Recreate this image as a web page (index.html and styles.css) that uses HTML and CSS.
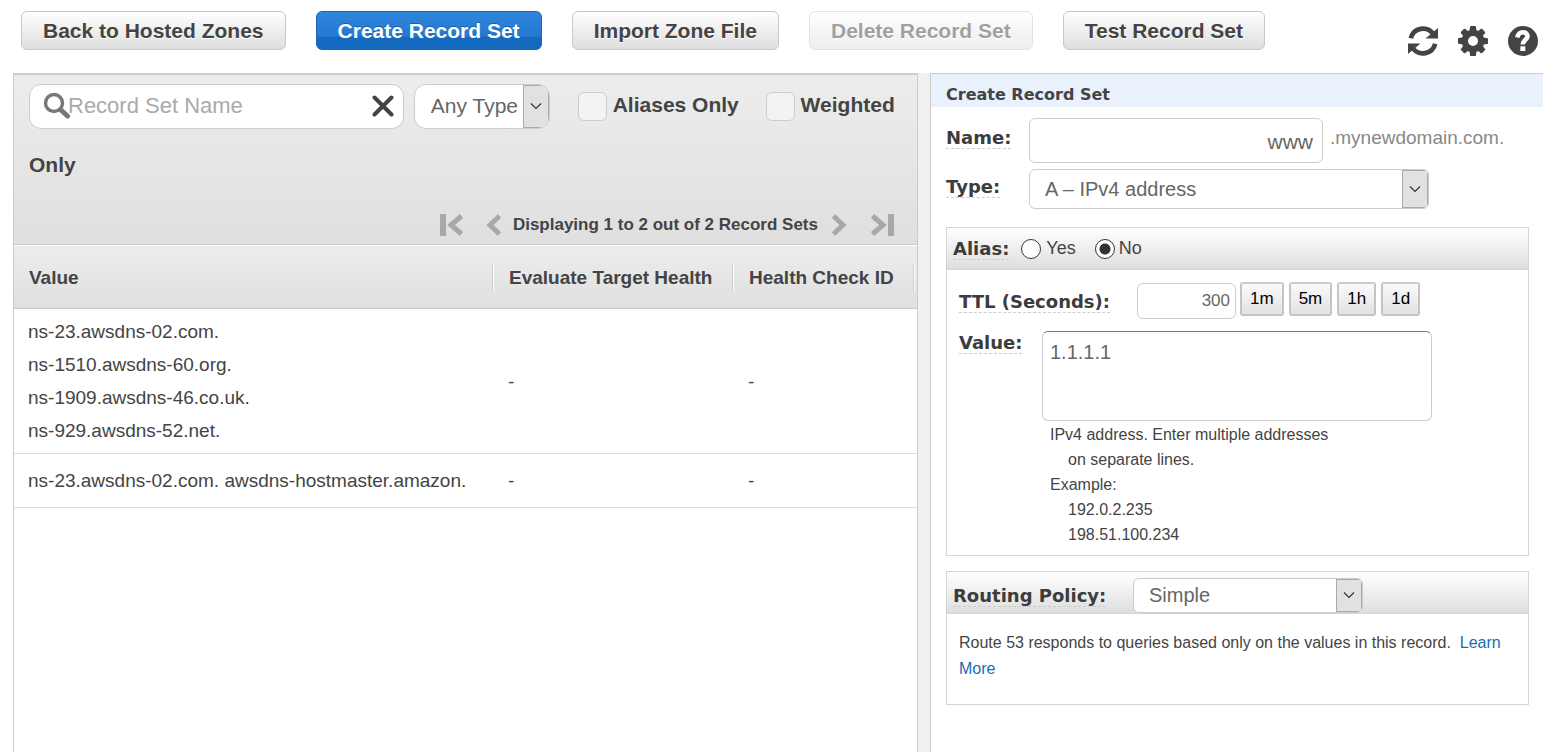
FILE: index.html
```html
<!DOCTYPE html>
<html lang="en">
<head>
<meta charset="utf-8">
<title>Hosted Zone Record Sets</title>
<link rel="stylesheet" href="styles.css">
</head>
<body>
<header class="toolbar">
  <button class="btn" type="button">Back to Hosted Zones</button>
  <button class="btn btn-primary" type="button">Create Record Set</button>
  <button class="btn" type="button">Import Zone File</button>
  <button class="btn" type="button" disabled>Delete Record Set</button>
  <button class="btn" type="button">Test Record Set</button>
  <div class="tools">
    <button class="icon-btn" type="button" aria-label="Refresh">
      <svg viewBox="0 0 30 30"><g fill="none" stroke="currentColor" stroke-width="4.8"><path d="M2.8 12.2A12.5 12.5 0 0 1 25.2 8"/><path d="M27.2 17.8A12.5 12.5 0 0 1 4.8 22"/></g><path fill="currentColor" d="M30 2v10.5H17.6zM0 28V17.5h12.4z"/></svg>
    </button>
    <button class="icon-btn" type="button" aria-label="Settings">
      <svg viewBox="0 128 1536 1536"><path fill="currentColor" d="M1024 896q0-106-75-181t-181-75-181 75-75 181 75 181 181 75 181-75 75-181zm512-109v222q0 12-8 23t-20 13l-185 28q-19 54-39 91 35 50 107 138 10 12 10 25t-9 23q-27 37-99 108t-94 71q-12 0-26-9l-138-108q-44 23-91 38-16 136-29 186-7 28-36 28h-222q-14 0-24.500-8.500t-11.500-21.500l-28-184q-49-16-90-37l-141 107q-10 9-25 9-14 0-25-11-126-114-165-168-7-10-7-23 0-12 8-23 15-21 51-66.500t54-70.500q-27-50-41-99l-183-27q-13-2-21-12.500t-8-23.500v-222q0-12 8-23t19-13l186-28q14-46 39-92-40-57-107-138-10-12-10-24 0-10 9-23 26-36 98.500-107.500t94.500-71.500q13 0 26 10l138 107q44-23 91-38 16-136 29-186 7-28 36-28h222q14 0 24.500 8.500t11.500 21.500l28 184q49 16 90 37l142-107q9-9 24-9 13 0 25 10 129 119 165 170 7 8 7 22 0 12-8 23-15 21-51 66.500t-54 70.500q26 50 41 98l183 28q13 2 21 12.500t8 23.500z"/></svg>
    </button>
    <button class="icon-btn" type="button" aria-label="Help">
      <svg viewBox="0 0 30 30"><circle cx="15" cy="15" r="15" fill="currentColor"/><path d="M9.300 11.500C10.100 8 12.300 6.300 15 6.300c2.800 0 4.500 1.700 4.500 4 0 3.700-4.800 3.900-4.800 8.300" fill="none" stroke="#fff" stroke-width="4.600"/><path fill="#fff" d="M12.300 20.300h5v4.700h-5z"/></svg>
    </button>
  </div>
</header>

<main class="layout">
  <section class="records">
    <div class="filters">
      <div class="filter-line">
        <span class="search"><svg class="search-icon" viewBox="0 0 28 28"><circle cx="11" cy="11" r="8.500" fill="#fff" stroke="#77777b" stroke-width="3.400"/><path d="M18 18l6.500 6" stroke="#77777b" stroke-width="5" stroke-linecap="round"/></svg><input class="search-input" type="text" placeholder="Record Set Name" aria-label="Record Set Name"><button class="clear" type="button" aria-label="Clear"><svg viewBox="0 0 22 22"><path d="M2.500 2.500l17 17M19.500 2.500l-17 17" stroke="#444" stroke-width="4" stroke-linecap="round"/></svg></button></span>
        <span class="picker picker-type"><select aria-label="Record type"><option>Any Type</option></select><span class="arrow"><svg viewBox="0 0 12 8"><path d="M1 1.500l5 5 5-5" fill="none" stroke="#333" stroke-width="1.200"/></svg></span></span>
        <input class="check" type="checkbox" id="aliases"><label for="aliases">Aliases Only</label>
        <input class="check" type="checkbox" id="weighted"><label for="weighted">Weighted Only</label>
      </div>
      <nav class="pager" aria-label="Pages">
        <button class="page-btn page-first" type="button" aria-label="First page"><svg viewBox="0 0 24 22"><path fill="#a8a8a8" d="M0 0h6v22H0z"/><path d="M21.500 2L11 11l10.500 9" fill="none" stroke="#a8a8a8" stroke-width="5"/></svg></button>
        <button class="page-btn page-prev" type="button" aria-label="Previous page"><svg class="single" viewBox="0 0 16 22"><path d="M13.500 2L4 11l9.500 9" fill="none" stroke="#a8a8a8" stroke-width="5"/></svg></button>
        <span class="page-text">Displaying 1 to 2 out of 2 Record Sets</span>
        <button class="page-btn page-next" type="button" aria-label="Next page"><svg class="single" viewBox="0 0 16 22"><path d="M2.500 2L12 11l-9.500 9" fill="none" stroke="#a8a8a8" stroke-width="5"/></svg></button>
        <button class="page-btn" type="button" aria-label="Last page"><svg viewBox="0 0 24 22"><path fill="#a8a8a8" d="M18 0h6v22h-6z"/><path d="M2.500 2L13 11 2.500 20" fill="none" stroke="#a8a8a8" stroke-width="5"/></svg></button>
      </nav>
    </div>
    <table class="grid">
      <colgroup><col><col class="col-eval"><col class="col-check"></colgroup>
      <thead>
        <tr><th><span>Value</span></th><th><span>Evaluate Target Health</span></th><th><span>Health Check ID</span></th></tr>
      </thead>
      <tbody>
        <tr><td>ns-23.awsdns-02.com.<br>ns-1510.awsdns-60.org.<br>ns-1909.awsdns-46.co.uk.<br>ns-929.awsdns-52.net.</td><td>-</td><td>-</td></tr>
        <tr><td>ns-23.awsdns-02.com. awsdns-hostmaster.amazon.</td><td>-</td><td>-</td></tr>
      </tbody>
    </table>
  </section>

  <section class="editor">
    <h2 class="editor-title">Create Record Set</h2>
    <form class="form">
      <div class="row">
        <div class="cell"><label class="tag" for="name">Name:</label></div>
        <input class="box name-box" id="name" type="text" value="www">
        <span class="suffix">.mynewdomain.com.</span>
      </div>
      <div class="row type-row">
        <div class="cell"><label class="tag" for="type">Type:</label></div>
        <span class="picker picker-record"><select id="type"><option>A – IPv4 address</option></select><span class="arrow"><svg viewBox="0 0 12 8"><path d="M1 1.500l5 5 5-5" fill="none" stroke="#333" stroke-width="1.200"/></svg></span></span>
      </div>

      <div class="group">
        <div class="group-head" role="radiogroup" aria-labelledby="alias-tag">
          <span class="tag" id="alias-tag">Alias:</span>
          <input class="radio" type="radio" name="alias" id="alias-yes"><label class="radio-text" for="alias-yes">Yes</label>
          <input class="radio radio-no" type="radio" name="alias" id="alias-no" checked><label class="radio-text" for="alias-no">No</label>
        </div>
        <div class="group-body">
          <div class="row ttl-row">
            <div class="wide-cell"><label class="tag" for="ttl">TTL (Seconds):</label></div>
            <input class="box ttl-box" id="ttl" type="text" value="300">
            <div class="presets">
              <button class="mini" type="button">1m</button>
              <button class="mini" type="button">5m</button>
              <button class="mini" type="button">1h</button>
              <button class="mini" type="button">1d</button>
            </div>
          </div>
          <div class="row value-row">
            <div class="cell"><label class="tag" for="value">Value:</label></div>
            <div class="value-col">
              <textarea class="box value-box" id="value">1.1.1.1</textarea>
              <div class="help">
                <p>IPv4 address. Enter multiple addresses</p>
                <p class="indent">on separate lines.</p>
                <p>Example:</p>
                <p class="indent">192.0.2.235</p>
                <p class="indent">198.51.100.234</p>
              </div>
            </div>
          </div>
        </div>
      </div>

      <div class="group">
        <div class="group-head policy-head">
          <div class="policy-cell"><label class="tag" for="policy">Routing Policy:</label></div>
          <span class="picker picker-policy"><select id="policy"><option>Simple</option></select><span class="arrow"><svg viewBox="0 0 12 8"><path d="M1 1.500l5 5 5-5" fill="none" stroke="#333" stroke-width="1.200"/></svg></span></span>
        </div>
        <p class="policy-text">Route 53 responds to queries based only on the values in this record.&nbsp; <a href="#">Learn More</a></p>
      </div>
    </form>
  </section>
</main>
</body>
</html>
```
FILE: styles.css
```css
* { box-sizing: border-box; }

body {
  margin: 0;
  min-height: 100vh;
  display: flex;
  flex-direction: column;
  background: #fff;
  color: #444;
  font-family: "Liberation Sans", Arial, sans-serif;
  font-size: 20px;
}

button, input, select, textarea { font: inherit; margin: 0; }
p, h2 { margin: 0; }
svg { display: block; }

/* Toolbar */
.toolbar {
  display: flex;
  align-items: flex-start;
  gap: 30px;
  height: 73px;
  padding: 11px 5px 0 21px;
}

.btn {
  height: 39px;
  padding: 0 21px;
  border: 1px solid #c8c8c8;
  border-radius: 6px;
  background: linear-gradient(#fff, #dedede);
  color: #444;
  font-size: 21px;
  font-weight: bold;
  white-space: nowrap;
  text-shadow: 0 1px 0 #fff;
}

.btn-primary {
  border-color: #1766b8;
  background: linear-gradient(#2f85dc, #2478cf 66%, #146abf 67%);
  color: #fff;
  text-shadow: 0 -1px 0 #1460ae;
}

.btn:disabled { opacity: 0.5; }

.tools {
  display: flex;
  gap: 20px;
  margin-left: auto;
  padding-top: 15px;
}

.icon-btn {
  width: 30px;
  height: 30px;
  padding: 0;
  border: 0;
  background: none;
  color: #444;
}

/* Two panels with a splitter between */
.layout {
  flex: 1;
  display: grid;
  grid-template-columns: minmax(0, 905fr) minmax(0, 613fr);
  column-gap: 12px;
  margin-left: 13px;
  background: #f0f0f0;
}

.records {
  border: solid #ccc;
  border-width: 2px 1px 0;
  background: #fff;
}

.filters {
  border-bottom: 1px solid #ccc;
  background: linear-gradient(#ededed, #dfdfdf);
}

.filter-line {
  padding: 0 14px 0 15px;
  font-size: 21px;
  font-weight: bold;
  line-height: 60px;
}

.search {
  display: inline-flex;
  align-items: center;
  width: 375px;
  height: 45px;
  padding: 0 9px 0 13px;
  border: 1px solid #ccc;
  border-radius: 12px;
  background: #fff;
  vertical-align: middle;
}

.search-icon { flex: none; width: 28px; height: 28px; }

.search-input {
  flex: 1;
  min-width: 0;
  height: 40px;
  margin-left: -3px;
  padding: 0;
  border: 0;
  outline: 0;
  background: none;
  color: #666;
  font-size: 22px;
  font-weight: normal;
}

.search-input::placeholder { color: #aaa; opacity: 1; }

.clear {
  flex: none;
  width: 22px;
  height: 22px;
  padding: 0;
  border: 0;
  background: none;
}

.picker {
  position: relative;
  display: inline-flex;
  overflow: hidden;
  border: 1px solid #ccc;
  border-radius: 6px;
  background: #fff;
}

.picker select {
  appearance: none;
  width: 100%;
  padding: 0 26px 0 15px;
  border: 0;
  outline: 0;
  background: none;
  color: #666;
}

.arrow {
  position: absolute;
  top: 0;
  right: 0;
  bottom: 0;
  display: flex;
  align-items: center;
  justify-content: center;
  width: 26px;
  border: 1px solid #aaa;
  background: #e1e1e1;
  pointer-events: none;
}

.arrow svg { width: 12px; height: 8px; }

.picker-type {
  width: 136px;
  height: 45px;
  margin-left: 4px;
  border-radius: 12px;
  font-weight: normal;
  line-height: 24px;
  vertical-align: middle;
}

.picker-type select { padding: 0 0 0 16px; }

.check {
  appearance: none;
  width: 29px;
  height: 29px;
  margin: 0 6px 0 22px;
  border: 1px solid #ccc;
  border-radius: 6px;
  background: #f3f3f4;
  vertical-align: middle;
}

.check + label + .check { margin-left: 21px; }

.pager {
  display: flex;
  align-items: center;
  justify-content: flex-end;
  height: 49px;
  padding: 11px 23px 0 0;
}

.page-btn {
  padding: 0;
  border: 0;
  background: none;
}

.page-btn svg { width: 24px; height: 22px; }
.page-btn .single { width: 16px; }
.page-first { margin-right: 22px; }
.page-prev { margin-right: 11px; }
.page-next { margin: 0 23px 0 13px; }

.page-text {
  font-size: 17px;
  font-weight: bold;
}

/* Record table */
.grid {
  width: 100%;
  border-collapse: separate;
  border-spacing: 0;
  table-layout: fixed;
}

.col-eval { width: 240px; }
.col-check { width: 184px; }

.grid thead { background: linear-gradient(#ededed, #dfdfdf); }

.grid th {
  padding: 18px 0 17px;
  border-top: 1px solid #fff;
  border-bottom: 1px solid #ccc;
  font-size: 19px;
  line-height: 27px;
  text-align: left;
}

.grid th span {
  display: block;
  padding-left: 16px;
  border-right: 1px solid #ccc;
  box-shadow: 1px 0 0 #fff;
  white-space: nowrap;
}

.grid th:first-child span { padding-left: 15px; }
.grid th:last-child { padding-right: 3px; }

.grid td {
  height: 54px;
  padding: 6px 0 6px 15px;
  border-bottom: 1px solid #ddd;
  font-size: 19px;
  line-height: 33px;
}

.grid td:first-child { padding-left: 14px; }

/* Editor */
.editor {
  border-top: 1px solid #ccc;
  border-left: 1px solid #ccc;
  background: #fff;
}

.editor-title {
  padding: 9px 15px 0;
  background: #e9f1fd;
  font-family: Verdana, "DejaVu Sans", sans-serif;
  font-size: 16px;
  line-height: 24px;
}

.form { padding: 11px 14px 0 15px; }

.row { display: flex; align-items: flex-start; }
.cell { flex: none; width: 83px; }
.wide-cell { flex: none; width: 178px; }
.policy-cell { flex: none; width: 180px; }

.tag {
  display: inline-block;
  padding-top: 2px;
  border-bottom: 1px dashed #ccc;
  color: #3c3c3c;
  font-family: Verdana, "DejaVu Sans", sans-serif;
  font-size: 18px;
  font-weight: bold;
  line-height: 20px;
  white-space: nowrap;
}

.row > .cell { padding-top: 8px; }

.box {
  border: 1px solid #ccc;
  border-radius: 6px;
  outline: 0;
  background: #fff;
  color: #666;
}

.name-box {
  width: 294px;
  height: 45px;
  padding: 2px 9px 0;
  font-size: 21px;
  text-align: right;
}

.suffix {
  margin-left: 7px;
  color: #888;
  font-size: 19px;
  line-height: 40px;
}

.type-row { margin: 6px 0 18px; }
.type-row > .cell { padding-top: 6px; }
.picker-record { width: 400px; height: 40px; }

.group {
  margin-bottom: 15px;
  border: 1px solid #d5d5d5;
}

.group-head {
  display: flex;
  align-items: center;
  height: 42px;
  padding: 0 6px;
  border-bottom: 1px solid #d5d5d5;
  background: linear-gradient(#fff, #dedede);
}

.radio {
  appearance: none;
  width: 20px;
  height: 20px;
  margin: 0 5px 0 12px;
  border: 1px solid #333;
  border-radius: 50%;
  background: #fff;
}

.radio:checked { background: radial-gradient(circle, #333 5px, #fff 6px); }
.radio-no { margin: 0 4px 0 19px; }
.radio-text { font-size: 18px; }

.group-body { padding: 12px 12px 9px; }

.ttl-box {
  width: 99px;
  height: 36px;
  margin-top: 1px;
  padding: 0 5px;
  font-size: 17px;
  text-align: right;
}

.ttl-row .wide-cell { padding-top: 8px; }

.presets { display: flex; gap: 5px; margin-left: 4px; }

.mini {
  height: 34px;
  padding: 0 8px;
  border: 2px solid #c4c4c4;
  border-top-color: #ccc;
  border-radius: 3px;
  background: linear-gradient(#fafafa, #e2e2e2);
  color: #000;
  font-size: 17px;
}

.value-row { margin-top: 12px; }
.value-row > .cell { padding-top: 0; }

.value-col { flex: none; width: 390px; }

.value-box {
  display: block;
  width: 100%;
  height: 90px;
  padding: 8px 7px;
  border-top-color: #777;
  line-height: 24px;
  resize: none;
}

.help {
  padding: 1px 0 0 8px;
  margin-bottom: -1px;
  font-size: 16px;
  line-height: 25px;
}

.indent { padding-left: 18px; }

.policy-head { padding-top: 5px; }
.picker-policy { width: 230px; height: 35px; }

.policy-text {
  padding: 16px 8px 22px 12px;
  font-size: 16px;
  line-height: 26px;
}

.policy-text a { color: #146eb4; text-decoration: none; }
```
